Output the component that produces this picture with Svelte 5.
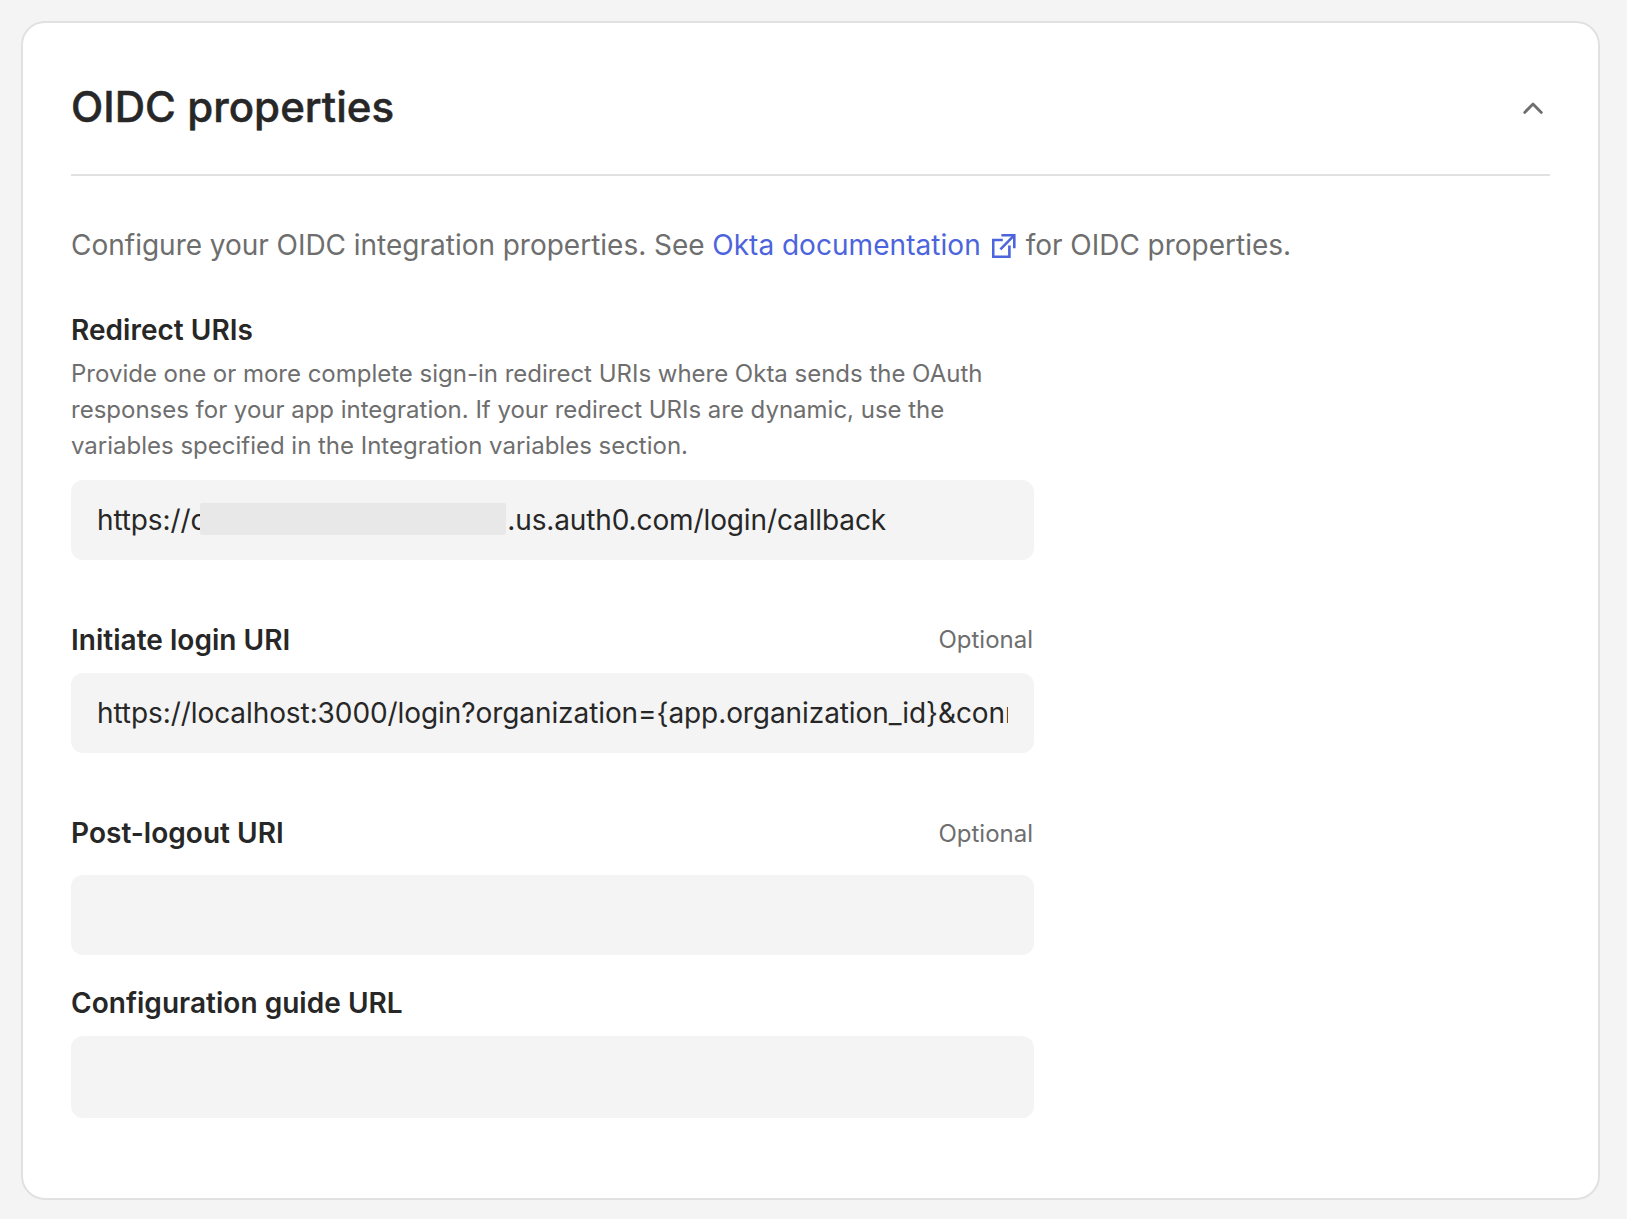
<script lang="ts">
	let open = $state(true);
	let loginUri = $state('https://localhost:3000/login?organization={app.organization_id}&connection={app.connection}');
	let logoutUri = $state('');
	let guideUrl = $state('');
</script>

<main class="page">
	<section class="card">
		<header class="card-header">
			<h2>OIDC properties</h2>
			<button
				class="toggle"
				type="button"
				aria-label="Toggle section"
				aria-expanded={open}
				onclick={() => (open = !open)}
			>
				<svg class:closed={!open} width="32" height="32" viewBox="0 0 32 32" fill="none">
					<path d="M6.7 21.4L15 13.1L23.3 21.4" />
				</svg>
			</button>
		</header>

		{#if open}
			<p class="intro">
				Configure your OIDC integration properties. See
				<a href="#docs"
					>Okta documentation<svg class="external" width="24" height="24" viewBox="0 0 24 24" fill="none">
						<path d="M10.8 6H1.2V22.8H17.4V11.4" />
						<path d="M9.4 1.2H22.3V14.2" />
						<path d="M22.1 1.4L8.4 15.4" />
					</svg></a
				>for OIDC properties.
			</p>

			<div class="fields">
				<div class="field">
					<div class="label-row">
						<span class="label">Redirect URIs</span>
					</div>
					<p class="hint">
						Provide one or more complete sign-in redirect URIs where Okta sends the OAuth responses for your
						app integration. If your redirect URIs are dynamic, use the variables specified in the
						Integration variables section.
					</p>
					<div class="input redacted">
						<span>https://c</span><span class="mask"></span><span>.us.auth0.com/login/callback</span>
					</div>
				</div>

				<div class="field">
					<div class="label-row">
						<label class="label" for="login-uri">Initiate login URI</label>
						<span class="optional">Optional</span>
					</div>
					<input class="input" id="login-uri" type="text" bind:value={loginUri} />
				</div>

				<div class="field post-logout">
					<div class="label-row">
						<label class="label" for="logout-uri">Post-logout URI</label>
						<span class="optional">Optional</span>
					</div>
					<input class="input" id="logout-uri" type="text" bind:value={logoutUri} />
				</div>

				<div class="field guide">
					<div class="label-row">
						<label class="label" for="guide-url">Configuration guide URL</label>
					</div>
					<input class="input" id="guide-url" type="text" bind:value={guideUrl} />
				</div>
			</div>
		{/if}
	</section>
</main>

<style>
	:global(body) {
		background: #f4f4f4;
	}

	.page {
		box-sizing: border-box;
		height: 1219px;
		padding: 21px 27px 19px 21px;
		font-family: 'Inter', sans-serif;
		color: #272727;
	}

	.card {
		box-sizing: border-box;
		height: 100%;
		padding: 0 48px;
		background: #fff;
		border: 2px solid #e1e1e1;
		border-radius: 24px;
	}

	.card-header {
		display: flex;
		align-items: center;
		justify-content: space-between;
		padding: 58px 0 41px;
		border-bottom: 2px solid #e1e1e1;
	}

	h2 {
		margin: 0;
		font-size: 42px;
		font-weight: 500;
		line-height: 52px;
		letter-spacing: 0.05px;
		-webkit-text-stroke: 0.5px #272727;
	}

	.toggle {
		display: flex;
		padding: 0;
		background: none;
		border: 0;
		cursor: pointer;
	}

	.toggle svg {
		stroke: #6e6e6e;
		stroke-width: 2.8;
		stroke-linecap: round;
		stroke-linejoin: round;
	}

	.toggle .closed {
		transform: rotate(180deg);
	}

	.intro {
		margin: 48px 0 44px;
		font-size: 28px;
		line-height: 42px;
		word-spacing: -0.2px;
		color: #6e6e6e;
	}

	.intro a {
		color: #4c64dc;
		letter-spacing: 0.05px;
		text-decoration: none;
	}

	.external {
		margin: 0 10px 0 11px;
		vertical-align: -3px;
		stroke: currentColor;
		stroke-width: 2.6;
	}

	.fields {
		width: 963px;
	}

	.field {
		margin-bottom: 60px;
	}

	.label-row {
		display: flex;
		align-items: center;
		justify-content: space-between;
		height: 40px;
		margin-bottom: 13px;
	}

	.label {
		font-size: 28px;
		font-weight: 600;
		line-height: 40px;
		letter-spacing: 0.03px;
	}

	.optional {
		margin-right: 1px;
		font-size: 24px;
		line-height: 40px;
		color: #6e6e6e;
	}

	.hint {
		margin: -7px 0 16px;
		font-size: 24px;
		line-height: 36px;
		word-spacing: -0.07px;
		color: #6e6e6e;
	}

	.input {
		display: block;
		box-sizing: border-box;
		width: 100%;
		height: 80px;
		padding: 0 26px;
		background: #f4f4f4;
		border: 0;
		border-radius: 12px;
		font-family: inherit;
		font-size: 28px;
		letter-spacing: -0.08px;
		color: #272727;
	}

	.redacted {
		display: flex;
		align-items: center;
		white-space: nowrap;
		letter-spacing: -0.12px;
	}

	.mask {
		position: relative;
		flex-shrink: 0;
		width: 306px;
		height: 32px;
		margin: 0 1px 2px -6px;
		background: #e8e8e8;
		border-radius: 2px;
	}

	.post-logout {
		margin-bottom: 28px;
	}

	.post-logout .label-row {
		margin-bottom: 22px;
	}

	.post-logout .optional {
		padding-top: 2px;
	}

	.guide {
		margin-bottom: 0;
	}

	.guide .input {
		height: 82px;
	}
</style>
